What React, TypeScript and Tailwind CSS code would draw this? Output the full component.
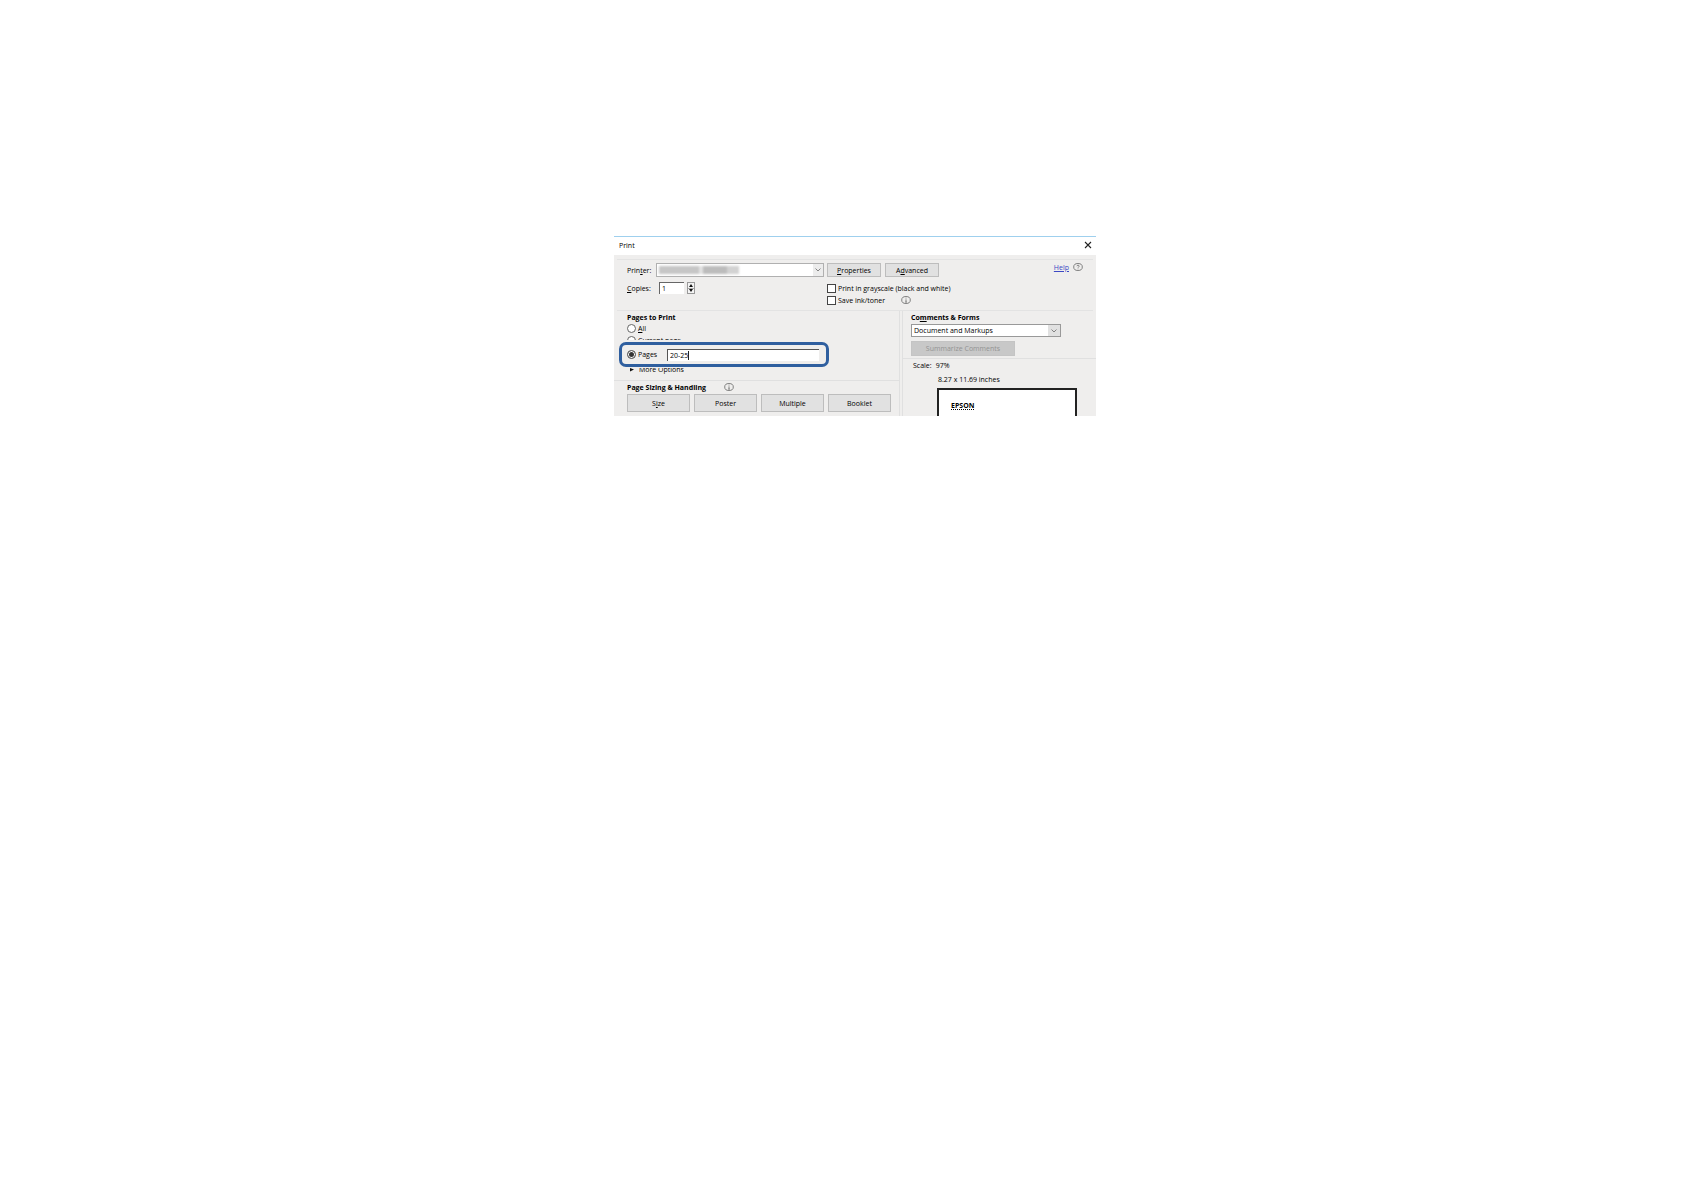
import { ReactNode } from "react";

const InfoIcon = ({ help = false }: { help?: boolean }) => (
  <svg viewBox="0 0 10 8" className="h-2 w-[10px] shrink-0" fill="none" stroke="#666" strokeWidth="0.8">
    <ellipse cx="5" cy="4" rx="4.3" ry="3.5" />
    {help ? (
      <path d="M3.9 3.2c0-1.3 2.3-1.3 2.3 0 0 .7-1.1.7-1.1 1.5M5 5.6v.6" />
    ) : (
      <path d="M5 1.7v.8M5 3.4v2.8M4.3 6.1h1.5" />
    )}
  </svg>
);

const Chevron = () => (
  <svg viewBox="0 0 8 6" className="h-[6px] w-2" fill="none" stroke="#777" strokeWidth="0.9">
    <path d="M1.5 1.5 4 4 6.5 1.5" />
  </svg>
);

const PushButton = ({ children, className }: { children: ReactNode; className: string }) => (
  <button
    type="button"
    className={`${className} flex items-center justify-center border border-[#bdbdbd] bg-[#e1e1e1] text-center`}
  >
    <span>{children}</span>
  </button>
);

const radio =
  "h-[9px] w-[9px] shrink-0 appearance-none rounded-full border border-[#666] bg-white checked:bg-[#333] checked:shadow-[inset_0_0_0_1px_#fff]";
const checkbox = "h-[9px] w-[9px] shrink-0 appearance-none border border-[#444] bg-white";

const PrinterSettings = () => (
  <section className="mx-[3px] mt-1 flex h-[52px] flex-col border-y border-[#e3e3e3] pl-[10px] pr-[10px] pt-[3px]">
    <div className="flex h-[14px] items-center">
      <label htmlFor="printer" className="w-[29px]">
        Prin<u>t</u>er:
      </label>
      <div className="relative h-[14px] w-[168px]">
        <select id="printer" className="h-full w-full appearance-none border border-[#b0b0b0] bg-white">
          <option></option>
        </select>
        {/* printer name is blurred out */}
        <div className="pointer-events-none absolute inset-y-[3px] left-[3px] flex blur-[1px]">
          <span className="w-10 bg-[#c6c6c6]" />
          <span className="w-1 bg-[#e2e2e2]" />
          <span className="w-6 bg-[#bcbcbc]" />
          <span className="w-3 bg-[#d2d2d2]" />
        </div>
        <span className="pointer-events-none absolute inset-y-px right-px flex w-[10px] items-center justify-center bg-[#ececec]">
          <Chevron />
        </span>
      </div>
      <PushButton className="ml-[3px] h-[14px] w-[54px]">
        <u>P</u>roperties
      </PushButton>
      <PushButton className="ml-1 h-[14px] w-[54px]">
        A<u>d</u>vanced
      </PushButton>
      <a href="#help" className="mb-[6px] ml-auto text-[#3c48c4] underline">
        Help
      </a>
      <span className="mb-[6px] ml-1">
        <InfoIcon help />
      </span>
    </div>
    <div className="mt-1 flex">
      <div className="flex h-[14px] w-[200px] items-center">
        <label htmlFor="copies" className="w-8">
          <u>C</u>opies:
        </label>
        <input
          id="copies"
          defaultValue="1"
          className="h-3 w-[25px] border-l border-t border-[#666] bg-white pl-[2px]"
        />
        <div className="ml-[3px] flex h-3 w-2 flex-col border border-[#999] bg-[#f4f4f4]">
          <button type="button" aria-label="More copies" className="flex flex-1 items-center justify-center border-b border-[#aaa]">
            <svg viewBox="0 0 4 3" className="h-[3px] w-1">
              <path d="M0 3 2 0l2 3Z" fill="#111" />
            </svg>
          </button>
          <button type="button" aria-label="Fewer copies" className="flex flex-1 items-center justify-center">
            <svg viewBox="0 0 4 3" className="h-[3px] w-1">
              <path d="M0 0h4L2 3Z" fill="#111" />
            </svg>
          </button>
        </div>
      </div>
      <div className="flex flex-col pt-px">
        <label className="flex h-3 items-center gap-[2px]">
          <input type="checkbox" className={checkbox} />
          <span>
            Print in gra<u>y</u>scale (black and white)
          </span>
        </label>
        <div className="flex h-3 items-center">
          <label className="flex w-[74px] items-center gap-[2px]">
            <input type="checkbox" className={checkbox} />
            <span>Save ink/toner</span>
          </label>
          <InfoIcon />
        </div>
      </div>
    </div>
  </section>
);

const PagesToPrint = () => (
  <section className="h-[70px] border-b border-[#e0e0e0] pl-[5px] pt-[2px]">
    <h2 className="pl-2 font-bold leading-[10px]">Pages to Print</h2>
    <label className="flex h-[10px] items-center gap-[2px] pl-2">
      <input type="radio" name="range" className={radio} />
      <span>
        <u>A</u>ll
      </span>
    </label>
    {/* the highlighted row covers most of its neighbours */}
    <label className="mb-[2px] flex h-[7px] items-start gap-[2px] overflow-hidden pl-2 pt-[3px]">
      <input type="radio" name="range" className={radio} />
      <span>Current page</span>
    </label>
    <div className="flex h-[25px] w-[210px] items-center rounded-[7px] border-[3px] border-[#2f5f9f] pl-[5px]">
      <input id="pages" type="radio" name="range" defaultChecked className={radio} />
      <label htmlFor="pages" className="ml-[2px] w-[29px]">
        Pa<u>g</u>es
      </label>
      <div className="relative h-3 w-[152px]">
        <input
          aria-label="Page range"
          defaultValue="20-25"
          className="block h-full w-full border-l border-t border-[#555] bg-white pl-[2px]"
        />
        <span className="absolute left-[21px] top-[2px] h-[9px] w-px bg-[#222]" />
      </div>
    </div>
    <button type="button" className="mt-px flex h-[6px] items-end gap-[5px] overflow-hidden pl-[11px]">
      <svg viewBox="0 0 4 6" className="h-[6px] w-1">
        <path d="M0 0 4 1.5 0 3.5Z" fill="#111" />
      </svg>
      <span>More Options</span>
    </button>
  </section>
);

const PageSizing = () => (
  <section className="pb-1 pl-[13px]">
    <div className="flex h-3 items-center gap-[18px]">
      <h2 className="font-bold">Page Sizing &amp; Handling</h2>
      <InfoIcon />
    </div>
    <div className="mt-px flex gap-1">
      <PushButton className="h-[18px] w-[63px]">
        S<u>i</u>ze
      </PushButton>
      <PushButton className="h-[18px] w-[63px]">Poster</PushButton>
      <PushButton className="h-[18px] w-[63px]">Multiple</PushButton>
      <PushButton className="h-[18px] w-[63px]">Booklet</PushButton>
    </div>
  </section>
);

const CommentsAndPreview = () => (
  <aside className="ml-[2px] flex w-[194px] flex-col border-l border-[#e0e0e0]">
    <section className="h-12 border-b border-[#e0e0e0] pl-2 pt-[2px]">
      <h2 className="font-bold leading-[10px]">
        <label htmlFor="comments">
          Co<u>m</u>ments &amp; Forms
        </label>
      </h2>
      <div className="relative mt-px h-[13px] w-[150px]">
        <select
          id="comments"
          className="block h-full w-full appearance-none border border-[#999] bg-white pl-[2px]"
        >
          <option>Document and Markups</option>
        </select>
        <span className="pointer-events-none absolute inset-y-px right-px flex w-3 items-center justify-center bg-[#e1e1e1]">
          <Chevron />
        </span>
      </div>
      <button
        type="button"
        disabled
        className="mt-1 block h-[15px] w-[104px] border border-[#c4c4c4] bg-[#c8c8c8] text-[#939393]"
      >
        Summarize Comments
      </button>
    </section>
    <section className="flex flex-1 flex-col pl-[10px] pt-[2px]">
      <p className="flex gap-1 leading-[10px]">
        <span>Scale:</span>
        <span>97%</span>
      </p>
      <p className="mt-1 pl-[25px] leading-[10px]">8.27 x 11.69 inches</p>
      <div className="ml-6 mt-[3px] w-[140px] flex-1 border-x-2 border-t-2 border-[#222] bg-white pl-3 pt-[11px]">
        <span className="block font-bold leading-[10px] underline decoration-dotted">EPSON</span>
      </div>
    </section>
  </aside>
);

export default function App() {
  return (
    <main className="flex min-h-screen items-start justify-center bg-white pl-[26px] pt-[236px]">
      <div
        role="dialog"
        aria-label="Print"
        className="w-[482px] border-t border-[#9fd0ee] bg-[#efeeed] font-['Open_Sans',sans-serif] text-[7px] leading-[9px] text-black"
      >
        <header className="flex h-[18px] items-center justify-between bg-white pb-[2px] pl-[5px] pr-1">
          <h1>Print</h1>
          <button type="button" aria-label="Close">
            <svg viewBox="0 0 8 8" className="h-2 w-2" stroke="#222" strokeWidth="1.1">
              <path d="M1 1l6 6M7 1 1 7" />
            </svg>
          </button>
        </header>
        <PrinterSettings />
        <div className="flex">
          <div className="flex-1 border-r border-[#e0e0e0]">
            <PagesToPrint />
            <PageSizing />
          </div>
          <CommentsAndPreview />
        </div>
      </div>
    </main>
  );
}
